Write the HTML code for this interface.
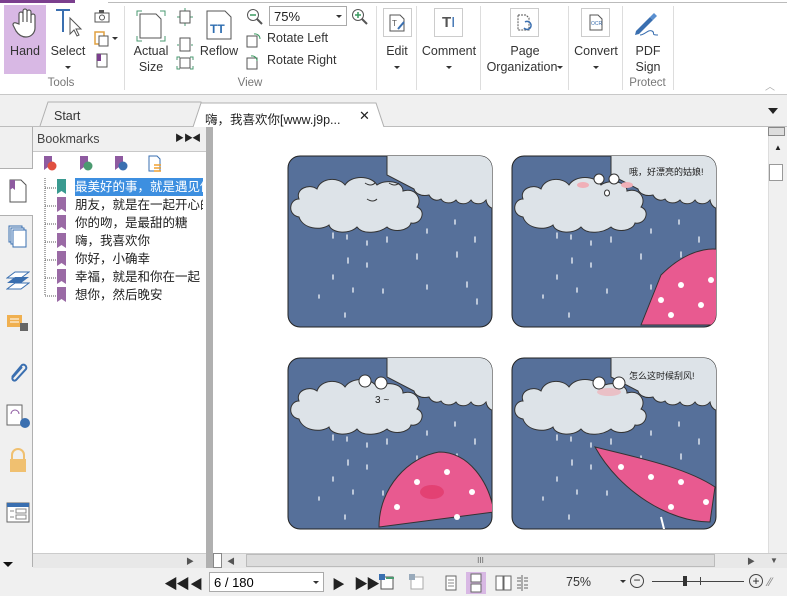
<!DOCTYPE html>
<html><head><meta charset="utf-8">
<style>
*{margin:0;padding:0;box-sizing:border-box}
body{width:787px;height:596px;overflow:hidden;background:#f0f0f0;font-family:"Liberation Sans","Noto Sans CJK SC",sans-serif;font-size:12px;color:#222;position:relative}
.a{position:absolute}
.lbl{position:absolute;font-size:12.5px;color:#333;text-align:center;line-height:16px}
.grp{position:absolute;font-size:11.5px;color:#777;text-align:center}
.sep{position:absolute;top:6px;width:1px;height:84px;background:#ddd}
.tri{display:inline-block;width:0;height:0;border-left:3px solid transparent;border-right:3px solid transparent;border-top:3px solid #333;vertical-align:middle}
.bm{position:absolute;left:75px;font-size:12.5px;line-height:18px;white-space:nowrap}
</style></head><body>
<div class="a" style="left:0;top:0;width:787px;height:95px;background:#fff;border-bottom:1px solid #c8c8c8"></div>
<div class="a" style="left:0;top:0;width:75px;height:3px;background:#7b3f8e"></div>
<div class="a" style="left:108px;top:2px;width:679px;height:1px;background:#bbb"></div>
<div class="a" style="left:4px;top:5px;width:42px;height:69px;background:#d8b8e4"></div>
<svg class="a" style="left:12px;top:8px" width="26" height="30" viewBox="0 0 26 30"><path d="M7 16V6a2 2 0 014 0v8V3a2 2 0 014 0v11V4a2 2 0 014 0v11V8a2 2 0 014 0v12c0 5-4 9-9 9s-8-3-10-6l-3-6a2 2 0 013-2z" fill="#fff" stroke="#555" stroke-width="1.2"/></svg>
<div class="lbl" style="left:4px;top:43px;width:42px">Hand</div>
<svg class="a" style="left:54px;top:8px" width="30" height="30"><path d="M2 2h14M9 2v22" stroke="#3a6fb0" stroke-width="2" fill="none"/><path d="M16 10v16l4-4 3 6 2-1-3-6h5z" fill="#fff" stroke="#555"/></svg>
<div class="lbl" style="left:48px;top:43px;width:40px">Select<br><span class="tri"></span></div>
<svg class="a" style="left:94px;top:9px" width="16" height="60"><rect x="1" y="4" width="14" height="9" fill="#fff" stroke="#555"/><rect x="5" y="1" width="5" height="3" fill="#555"/><circle cx="8" cy="8.5" r="2.5" fill="none" stroke="#555"/><rect x="1" y="23" width="9" height="12" fill="none" stroke="#e0a040" stroke-width="1.5"/><rect x="5" y="27" width="9" height="10" fill="#fff" stroke="#555"/><rect x="3" y="45" width="10" height="13" fill="#fff" stroke="#555"/><rect x="3" y="45" width="4" height="7" fill="#7b3f8e"/></svg>
<span class="tri a" style="left:112px;top:37px"></span>
<div class="grp" style="left:40px;top:77px;width:42px">Tools</div>
<div class="sep" style="left:124px"></div>
<svg class="a" style="left:136px;top:10px" width="30" height="32"><path d="M1 6V1h5M24 1h5v5M1 26v5h5M29 26v5h-5" stroke="#4a9a70" fill="none"/><path d="M4 4h16l5 5v19H4z" fill="#fff" stroke="#555"/></svg>
<div class="lbl" style="left:128px;top:43px;width:46px">Actual<br>Size</div>
<svg class="a" style="left:176px;top:8px" width="18" height="62"><path d="M9 0v4M9 14v4M1 9h3M14 9h3" stroke="#4a9a70"/><rect x="4" y="3" width="10" height="12" fill="#fff" stroke="#555"/><path d="M1 37h2M15 37h2" stroke="#4a9a70"/><rect x="4" y="30" width="10" height="13" fill="#fff" stroke="#555"/><path d="M1 52v-3h3M17 52v-3h-3M1 58v3h3M17 58v3h-3" stroke="#4a9a70" fill="none"/><rect x="4" y="50" width="10" height="10" fill="#fff" stroke="#555"/></svg>
<svg class="a" style="left:206px;top:10px" width="26" height="30"><path d="M1 1h18l6 6v22H1z" fill="#fff" stroke="#555"/><text x="4" y="23" font-family="Liberation Sans" font-weight="bold" font-size="12" fill="#2e6db0">TT</text></svg>
<div class="lbl" style="left:198px;top:43px;width:42px">Reflow</div>
<svg class="a" style="left:246px;top:8px" width="18" height="18"><circle cx="7" cy="7" r="5.5" fill="#fff" stroke="#555"/><path d="M4 7h6" stroke="#3a9a60" stroke-width="1.5"/><path d="M11 11l5 5" stroke="#555" stroke-width="2"/></svg>
<div class="a" style="left:269px;top:6px;width:78px;height:20px;border:1px solid #aaa;background:#fff;font-size:13px;padding:2px 4px">75%<span class="tri" style="position:absolute;right:4px;top:8px"></span></div>
<svg class="a" style="left:351px;top:8px" width="18" height="18"><circle cx="7" cy="7" r="5.5" fill="#fff" stroke="#555"/><path d="M4 7h6M7 4v6" stroke="#3a9a60" stroke-width="1.5"/><path d="M11 11l5 5" stroke="#555" stroke-width="2"/></svg>
<svg class="a" style="left:246px;top:30px" width="18" height="40"><rect x="1" y="6" width="10" height="11" fill="#fff" stroke="#555"/><path d="M8 4a5 5 0 016 5" stroke="#3a9a60" fill="none"/><rect x="1" y="28" width="10" height="11" fill="#fff" stroke="#555"/><path d="M5 26a5 5 0 016 5" stroke="#3a9a60" fill="none"/></svg>
<div class="a" style="left:267px;top:31px;font-size:12.5px;color:#333">Rotate Left</div>
<div class="a" style="left:267px;top:53px;font-size:12.5px;color:#333">Rotate Right</div>
<div class="grp" style="left:230px;top:77px;width:40px">View</div>
<div class="sep" style="left:376px"></div>
<div class="a" style="left:383px;top:8px;width:29px;height:29px;border:1px solid #ccc"></div>
<svg class="a" style="left:389px;top:14px" width="18" height="18"><path d="M1 1h10l4 4v12H1z" fill="#fff" stroke="#555"/><text x="3" y="12" font-size="8" fill="#555" font-family="Liberation Sans">T</text><path d="M9 15l6-7" stroke="#3a6fb0" stroke-width="2"/></svg>
<div class="lbl" style="left:380px;top:43px;width:34px">Edit<br><span class="tri"></span></div>
<div class="sep" style="left:416px"></div>
<div class="a" style="left:434px;top:8px;width:29px;height:29px;border:1px solid #ccc;font-weight:bold;font-size:15px;color:#555;padding:5px 0 0 7px">T<span style="color:#3a6fb0;font-weight:normal">I</span></div>
<div class="lbl" style="left:418px;top:43px;width:62px">Comment<br><span class="tri"></span></div>
<div class="sep" style="left:480px"></div>
<div class="a" style="left:510px;top:8px;width:29px;height:29px;border:1px solid #ccc"></div>
<svg class="a" style="left:517px;top:14px" width="18" height="18"><path d="M1 1h8l3 3v12H1z" fill="none" stroke="#555" stroke-dasharray="2 1"/><path d="M8 8a4 4 0 11-1 6" stroke="#3a6fb0" stroke-width="1.5" fill="none"/></svg>
<div class="lbl" style="left:484px;top:43px;width:82px">Page<br>Organization<span class="tri"></span></div>
<div class="sep" style="left:568px"></div>
<div class="a" style="left:581px;top:8px;width:29px;height:29px;border:1px solid #ccc"></div>
<svg class="a" style="left:589px;top:14px" width="14" height="17"><path d="M1 1h8l4 4v11H1z" fill="#fff" stroke="#555"/><text x="2" y="11" font-size="5" fill="#3a6fb0" font-family="Liberation Sans">OCR</text></svg>
<div class="lbl" style="left:570px;top:43px;width:52px">Convert<br><span class="tri"></span></div>
<div class="sep" style="left:622px"></div>
<svg class="a" style="left:632px;top:9px" width="30" height="28"><path d="M4 22l14-14 3 3-14 14-4 1z" fill="#3a6fb0"/><path d="M18 8l4-4 3 3-4 4z" fill="#5a8fd0"/><path d="M8 26c5 0 8-6 12-4s-2 4 6 4" stroke="#3a6fb0" fill="none"/></svg>
<div class="lbl" style="left:627px;top:43px;width:42px">PDF<br>Sign</div>
<div class="grp" style="left:622px;top:77px;width:51px">Protect</div>
<div class="sep" style="left:673px"></div>
<div class="a" style="left:765px;top:78px;color:#aaa;font-size:10px">︿</div>
<div class="a" style="left:0;top:126px;width:787px;height:1px;background:#bdbdbd"></div>
<svg class="a" style="left:36px;top:100px" width="350" height="27"><path d="M4 26L12 2h145l8 0l8 24" fill="#f0f0f0" stroke="#b0b0b0"/><path d="M157 27L165 3h175l8 24" fill="#fff" stroke="#b0b0b0"/></svg>
<div class="a" style="left:54px;top:109px;font-size:12.5px;color:#333">Start</div>
<div class="a" style="left:205px;top:109px;font-size:12.5px;color:#222">嗨，我喜欢你[www.j9p...</div>
<div class="a" style="left:359px;top:108px;font-size:13px">✕</div>
<div class="a" style="left:768px;top:108px;width:0;height:0;border-left:5px solid transparent;border-right:5px solid transparent;border-top:6px solid #222"></div>
<div class="a" style="left:32px;top:127px;width:1px;height:440px;background:#b0b0b0"></div>
<div class="a" style="left:0;top:168px;width:33px;height:48px;background:#fff;border-top:1px solid #b0b0b0;border-bottom:1px solid #b0b0b0"></div>
<svg class="a" style="left:8px;top:178px" width="20" height="26"><path d="M2 2h11l5 5v17H2z" fill="#fff" stroke="#555"/><path d="M2 2h5v10l-2.5-2L2 12z" fill="#8e5aa0"/></svg>
<svg class="a" style="left:8px;top:225px" width="20" height="24"><rect x="1" y="1" width="13" height="16" fill="none" stroke="#3a6fb0"/><rect x="3" y="3" width="13" height="16" fill="#fff" stroke="#3a6fb0"/><rect x="5" y="5" width="13" height="17" fill="#fff" stroke="#3a6fb0"/></svg>
<svg class="a" style="left:6px;top:270px" width="24" height="22"><path d="M1 8l8-6h14l-8 6z" fill="#fff" stroke="#3a6fb0"/><path d="M1 13l8-6h14l-8 6z" fill="#3a6fb0"/><path d="M1 19l8-6h14l-8 6z" fill="#fff" stroke="#3a6fb0"/></svg>
<svg class="a" style="left:6px;top:314px" width="24" height="22"><rect x="1" y="1" width="15" height="12" fill="#f0b050"/><path d="M4 5h9M4 8h9" stroke="#fff"/><rect x="14" y="9" width="8" height="8" fill="#666"/></svg>
<svg class="a" style="left:8px;top:359px" width="20" height="24"><path d="M4 18l10-12a3 3 0 014 4L8 21a2 2 0 01-3-3l9-10" stroke="#3a6fb0" stroke-width="2" fill="none"/></svg>
<svg class="a" style="left:6px;top:404px" width="24" height="26"><rect x="1" y="1" width="15" height="20" fill="#fff" stroke="#666"/><path d="M5 10a4 4 0 018 0" stroke="#8e5aa0" fill="none"/><circle cx="19" cy="19" r="5" fill="#3a6fb0"/></svg>
<svg class="a" style="left:8px;top:448px" width="20" height="26"><path d="M4 11V7a6 6 0 0112 0v4" stroke="#f0c070" stroke-width="2" fill="none"/><rect x="2" y="11" width="16" height="13" fill="#f0c070"/></svg>
<svg class="a" style="left:6px;top:502px" width="24" height="22"><rect x="1" y="1" width="22" height="19" fill="#fff" stroke="#666"/><rect x="1" y="1" width="22" height="4" fill="#3a6fb0"/><path d="M4 9h4M4 15h4" stroke="#888"/><rect x="10" y="7" width="10" height="4" fill="none" stroke="#888"/><rect x="10" y="13" width="10" height="4" fill="none" stroke="#888"/></svg>
<div class="a" style="left:3px;top:562px;width:0;height:0;border-left:5px solid transparent;border-right:5px solid transparent;border-top:5px solid #111"></div>
<div class="a" style="left:37px;top:132px;font-size:12.5px;color:#444">Bookmarks</div>
<div class="a" style="left:175px;top:131px;font-size:9px;font-weight:bold">▶▶</div>
<div class="a" style="left:192px;top:131px;font-size:9px">◀</div>
<div class="a" style="left:33px;top:151px;width:173px;height:402px;background:#fff;border-top:1px solid #c8c8c8"></div>
<svg class="a" style="left:42px;top:155px" width="125" height="18"><path d="M2 1h8v14l-4-3-4 3z" fill="#8e5aa0"/><circle cx="10" cy="11" r="4.5" fill="#e05040"/><path d="M38 1h8v14l-4-3-4 3z" fill="#8e5aa0"/><circle cx="46" cy="11" r="4.5" fill="#4a9a70"/><path d="M73 1h8v14l-4-3-4 3z" fill="#8e5aa0"/><circle cx="81" cy="11" r="4.5" fill="#3a6fb0"/><path d="M107 1h8l3 3v12h-11z" fill="#fff" stroke="#3a6fb0"/><path d="M112 10h7M112 13h7M112 16h7" stroke="#f0a030" stroke-width="1.5"/></svg>
<svg class="a" style="left:44px;top:178px" width="16" height="122"><path d="M1 0v118M1 10h14M1 28h14M1 46h14M1 64h14M1 82h14M1 100h14M1 118h14" stroke="#555" stroke-dasharray="1 1"/></svg>
<svg class="a" style="left:57px;top:179px" width="10" height="126"><path d="M0 0h9v15l-4.5-3L0 15z" fill="#3a9a90"/><g fill="#9a6aa5"><path d="M0 18h9v15l-4.5-3L0 33z"/><path d="M0 36h9v15l-4.5-3L0 51z"/><path d="M0 54h9v15l-4.5-3L0 69z"/><path d="M0 72h9v15l-4.5-3L0 87z"/><path d="M0 90h9v15l-4.5-3L0 105z"/><path d="M0 108h9v15l-4.5-3L0 123z"/></g></svg>
<div class="bm" style="top:178px;background:#3d8fe0;color:#fff;width:128px;overflow:hidden">最美好的事，就是遇见你</div>
<div class="bm" style="top:196px;width:128px;overflow:hidden">朋友，就是在一起开心的</div>
<div class="bm" style="top:214px">你的吻，是最甜的糖</div>
<div class="bm" style="top:232px">嗨，我喜欢你</div>
<div class="bm" style="top:250px">你好，小确幸</div>
<div class="bm" style="top:268px">幸福，就是和你在一起</div>
<div class="bm" style="top:286px">想你，然后晚安</div>
<div class="a" style="left:33px;top:553px;width:173px;height:15px;background:#e8e8e8;border-top:1px solid #ccc"></div>
<div class="a" style="left:186px;top:556px;font-size:8px;color:#555">▶</div>
<div class="a" style="left:206px;top:127px;width:7px;height:441px;background:#b0b0b0"></div>
<div class="a" style="left:213px;top:127px;width:555px;height:426px;background:#fff"></div>
<div class="a" style="left:768px;top:127px;width:19px;height:426px;background:#f0f0f0;border-left:1px solid #ddd"></div>
<div class="a" style="left:768px;top:127px;width:17px;height:9px;background:#ddd;border:1px solid #888"></div>
<div class="a" style="left:774px;top:143px;font-size:8px">▲</div>
<div class="a" style="left:769px;top:164px;width:14px;height:17px;background:#fff;border:1px solid #999"></div>
<div class="a" style="left:213px;top:553px;width:574px;height:15px;background:#e8e8e8;border-top:1px solid #ccc"></div>
<div class="a" style="left:213px;top:553px;width:9px;height:15px;background:#fff;border:1px solid #888"></div>
<div class="a" style="left:227px;top:556px;font-size:8px;color:#555">◀</div>
<div class="a" style="left:246px;top:554px;width:469px;height:13px;background:#dcdcdc;border:1px solid #bbb;text-align:center;font-size:8px;line-height:11px;color:#666">III</div>
<div class="a" style="left:747px;top:556px;font-size:8px;color:#555">▶</div>
<div class="a" style="left:770px;top:556px;font-size:8px;color:#555">▼</div>

<svg class="a" style="left:287px;top:155px" width="432" height="375">
<defs>
<g id="rain" stroke="#dde4ee" stroke-width="1.5" stroke-linecap="round">
<path d="M46 78v5M60 80v4M80 86v4M100 82v5M61 103v5M80 108v4M46 120v4M66 133v4M96 134v4M130 99v5M140 74v4M168 65v4M188 82v5M170 97v5M180 127v5M190 144v5M32 140v3M58 158v4M140 130v4"/>
</g>
<g id="cloud">
<path d="M100 0H210V54c-6 0-10-3-11-9c-4 5-12 5-15 0c-4 5-12 5-15 0c-4 4-12 4-15-1c-5 3-10 0-12-4c-8 2-14-2-15-6L100 20z" fill="#dde3e8" stroke="#333"/>
<path d="M12 62c-12-2-10-18 0-18-4-10 10-16 18-10 4-12 22-12 28-4 6-10 26-10 32 0 8-6 26-4 26 6 12-4 20 8 14 16 10 4 4 18-6 16-2 8-18 10-24 4-8 6-24 8-30 0-8 8-26 6-28-2-8 6-26 4-30-8z" fill="#dde3e8" stroke="#333"/>
</g>
<clipPath id="c1"><rect x="1" y="1" width="204" height="171" rx="12"/></clipPath>
</defs>
<g><rect x="1" y="1" width="204" height="171" rx="12" fill="#56709a" stroke="#222"/><use href="#rain"/><g clip-path="url(#c1)"><use href="#cloud"/></g><path d="M78 28q6 4 10 0M102 28q6 4 10 0M80 44q6 4 10 0" stroke="#333" fill="none"/></g>
<g transform="translate(224,0)"><rect x="1" y="1" width="204" height="171" rx="12" fill="#56709a" stroke="#222"/><use href="#rain"/><g clip-path="url(#c1)"><use href="#cloud"/><path d="M130 170l20-50c30-30 60-30 70-20v70z" fill="#e85a90" stroke="#333"/><g fill="#fff"><circle cx="150" cy="145" r="3"/><circle cx="170" cy="130" r="3"/><circle cx="190" cy="150" r="3"/><circle cx="200" cy="125" r="3"/><circle cx="160" cy="160" r="3"/></g></g><circle cx="88" cy="24" r="5" fill="#fff" stroke="#333"/><circle cx="103" cy="24" r="5" fill="#fff" stroke="#333"/><ellipse cx="96" cy="38" rx="2.5" ry="3" fill="#fff" stroke="#333"/><ellipse cx="72" cy="30" rx="6" ry="3" fill="#f0b0b8"/><ellipse cx="116" cy="30" rx="6" ry="3" fill="#f0b0b8"/><text x="118" y="20" font-size="9" fill="#222">哦，好漂亮的姑娘!</text></g>
<g transform="translate(0,202)"><rect x="1" y="1" width="204" height="171" rx="12" fill="#56709a" stroke="#222"/><use href="#rain"/><g clip-path="url(#c1)"><use href="#cloud"/><path d="M92 170c0-40 30-70 60-75 30 0 50 30 55 60z" fill="#e85a90" stroke="#333"/><g fill="#fff"><circle cx="110" cy="150" r="3"/><circle cx="130" cy="125" r="3"/><circle cx="160" cy="115" r="3"/><circle cx="185" cy="135" r="3"/><circle cx="170" cy="160" r="3"/></g><ellipse cx="145" cy="135" rx="12" ry="7" fill="#e03060" opacity=".6"/></g><circle cx="78" cy="24" r="6" fill="#fff" stroke="#333"/><circle cx="94" cy="26" r="6" fill="#fff" stroke="#333"/><text x="88" y="46" font-size="10" fill="#222">3 ~</text></g>
<g transform="translate(224,202)"><rect x="1" y="1" width="204" height="171" rx="12" fill="#56709a" stroke="#222"/><use href="#rain"/><g clip-path="url(#c1)"><use href="#cloud"/><path d="M84 90c40 10 90 20 120 40l-5 35c-40 0-90-30-115-75z" fill="#e85a90" stroke="#333"/><g fill="#fff"><circle cx="110" cy="110" r="3"/><circle cx="140" cy="120" r="3"/><circle cx="170" cy="125" r="3"/><circle cx="195" cy="145" r="3"/><circle cx="160" cy="150" r="3"/></g><path d="M150 160l5 20" stroke="#fff" stroke-width="2"/></g><circle cx="88" cy="26" r="6" fill="#fff" stroke="#333"/><circle cx="108" cy="26" r="6" fill="#fff" stroke="#333"/><ellipse cx="98" cy="35" rx="12" ry="4" fill="#f0b0b8" opacity=".7"/><text x="118" y="22" font-size="9" fill="#222">怎么这时候刮风!</text></g>
</svg>

<div class="a" style="left:164px;top:574px;font-size:14px;font-weight:bold;letter-spacing:-2px">◀◀</div>
<div class="a" style="left:190px;top:574px;font-size:13px">◀</div>
<div class="a" style="left:209px;top:572px;width:115px;height:20px;background:#fff;border:1px solid #aaa;font-size:13px;padding:2px 4px;color:#000">6 / 180<span class="tri" style="position:absolute;right:4px;top:8px"></span></div>
<div class="a" style="left:332px;top:574px;font-size:13px">▶</div>
<div class="a" style="left:354px;top:574px;font-size:14px;font-weight:bold;letter-spacing:-2px">▶▶</div>
<svg class="a" style="left:378px;top:572px" width="100" height="22"><rect x="3" y="5" width="12" height="12" fill="#fff" stroke="#555"/><rect x="1" y="2" width="6" height="6" fill="#3a6fb0"/><path d="M8 6h8" stroke="#4a9a70" stroke-width="2"/><rect x="33" y="5" width="12" height="12" fill="#fff" stroke="#aaa"/><rect x="31" y="2" width="6" height="6" fill="#9ab"/></svg>
<svg class="a" style="left:440px;top:572px" width="105" height="22"><rect x="6" y="4" width="10" height="14" fill="#fff" stroke="#666"/><path d="M8 8h6M8 11h6M8 14h6" stroke="#888"/><rect x="26" y="0" width="20" height="22" fill="#d8b8e4"/><rect x="31" y="2" width="10" height="8" fill="#fff" stroke="#666"/><rect x="31" y="12" width="10" height="8" fill="#fff" stroke="#666"/><rect x="56" y="4" width="7" height="14" fill="#fff" stroke="#666"/><rect x="64" y="4" width="7" height="14" fill="#fff" stroke="#666"/><path d="M82 3v16M77 6h4M77 9h4M77 13h4M77 16h4M84 6h4M84 9h4M84 13h4M84 16h4" stroke="#666"/></svg>
<div class="a" style="left:566px;top:575px;font-size:12.5px;color:#333">75%</div>
<span class="tri a" style="left:620px;top:580px"></span>
<div class="a" style="left:630px;top:574px;width:14px;height:14px;border:1px solid #444;border-radius:50%;text-align:center;line-height:11px">−</div>
<div class="a" style="left:652px;top:581px;width:92px;height:1px;background:#444"></div>
<div class="a" style="left:683px;top:576px;width:4px;height:10px;background:#333"></div>
<div class="a" style="left:700px;top:577px;width:1px;height:8px;background:#444"></div>
<div class="a" style="left:749px;top:574px;width:14px;height:14px;border:1px solid #444;border-radius:50%;text-align:center;line-height:12px">+</div>
<div class="a" style="left:768px;top:575px;font-size:12px;color:#888">⁄⁄</div>
</body></html>
